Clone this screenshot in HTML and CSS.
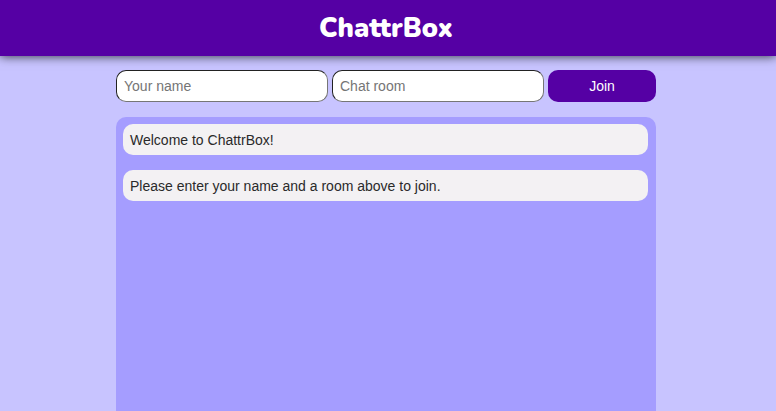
FILE: index.html
```html
<!DOCTYPE html>
<html lang="en">
<head>
<meta charset="utf-8">
<meta name="viewport" content="width=device-width, initial-scale=1">
<title>ChattrBox</title>
<link rel="stylesheet" href="styles.css">
</head>
<body>
<header class="header"><h1 class="logo">ChattrBox</h1></header>
<main class="chat">
<form class="join">
<input class="field" type="text" placeholder="Your name" aria-label="Your name">
<input class="field" type="text" placeholder="Chat room" aria-label="Chat room">
<button class="button" type="submit">Join</button>
</form>
<ul class="messages">
<li class="message">Welcome to ChattrBox!</li>
<li class="message">Please enter your name and a room above to join.</li>
</ul>
</main>
</body>
</html>
```

FILE: styles.css
```css
* {
  box-sizing: border-box;
}

body {
  display: flex;
  flex-direction: column;
  height: 100vh;
  margin: 0;
  overflow: hidden;
  background: #c8c4ff;
  color: #2a2a2a;
  font: 14px/17px "Liberation Sans", Arial, sans-serif;
}

.header {
  padding: 11px 14px 9px 10px;
  background: #5500a4;
  box-shadow: 0 0 10px rgba(0, 0, 0, 0.8);
  color: #fff;
  text-align: center;
}

.logo {
  margin: 0;
  font: 900 27px/36px Nunito, Lato, sans-serif;
  font-variant-ligatures: none;
}

.chat {
  display: flex;
  flex: 1;
  flex-direction: column;
  gap: 15px;
  width: 100%;
  max-width: 544px;
  margin: 0 auto;
  padding: 14px 4px 0 0;
}

.join {
  display: grid;
  grid-template-columns: 1fr 1fr 20%;
  gap: 4px;
}

.field,
.button {
  min-width: 0;
  height: 32px;
  border-radius: 10px;
  font: inherit;
}

.field {
  padding: 0 7px;
  border: 1px solid #767676;
  border-top-color: #222;
  border-left-color: #222;
  background: #fff;
}

.field::placeholder {
  color: #757575;
}

.button {
  border: 0;
  background: #5500a4;
  color: #fff;
}

.messages {
  display: flex;
  flex: 1;
  flex-direction: column;
  gap: 15px;
  margin: 0;
  padding: 7px 8px 0 7px;
  border-radius: 10px 10px 0 0;
  background: #a59dff;
  list-style: none;
}

.message {
  padding: 8px 7px 6px;
  border-radius: 10px;
  background: #f3f1f3;
}
```
